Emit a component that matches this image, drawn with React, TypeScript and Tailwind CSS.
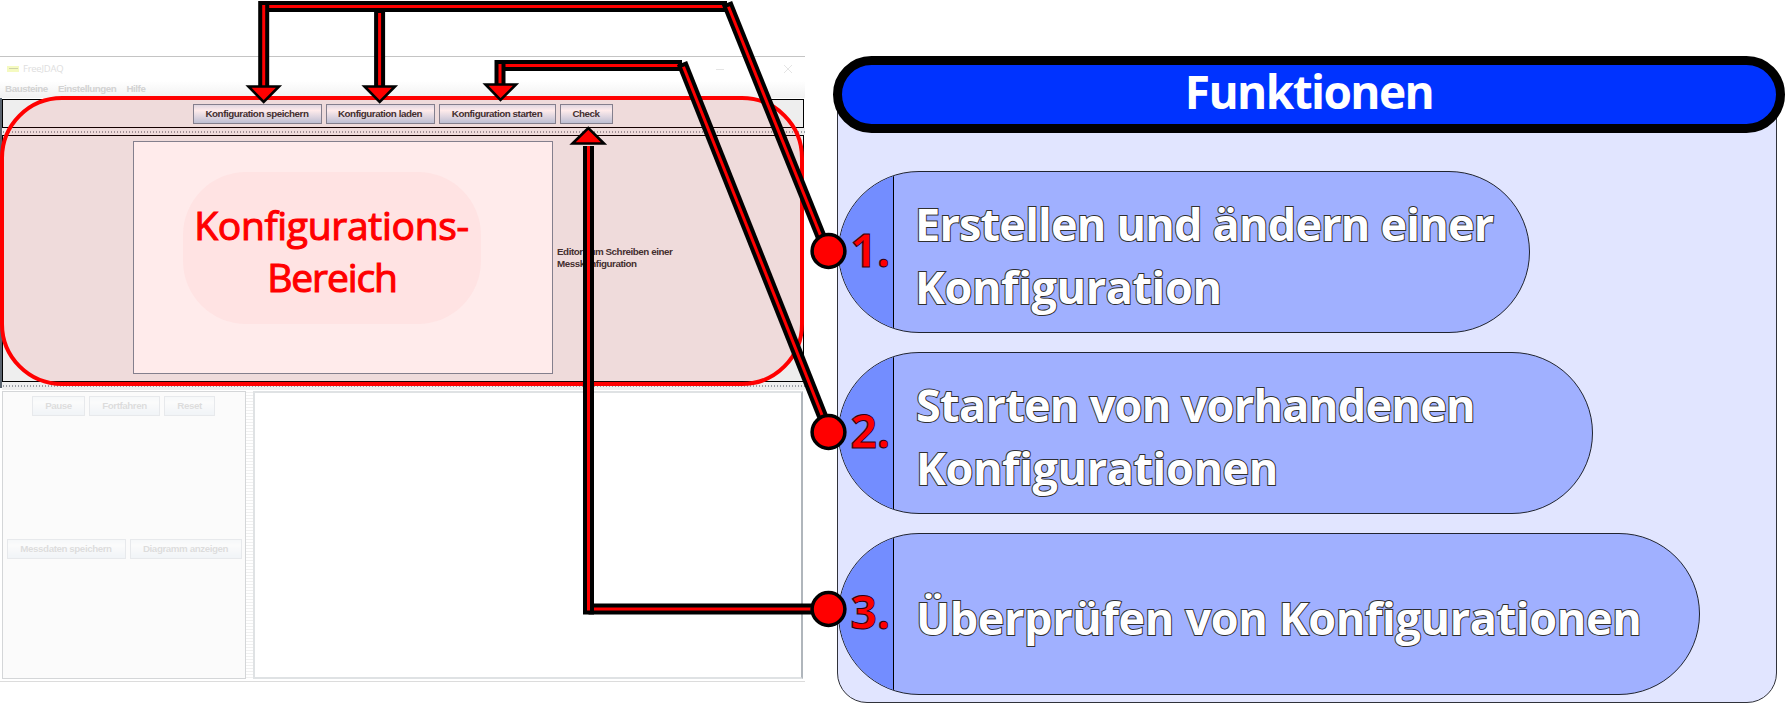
import { ReactNode } from "react";

const swing = "font-['Liberation_Sans',Arial,sans-serif] text-[9.8px] font-bold tracking-[-0.44px]";
const headline = "font-['Open_Sans','Noto_Sans',sans-serif] font-bold";

function SwingButton({ className, children }: { className: string; children: ReactNode }) {
  return (
    <button
      className={`flex shrink-0 items-center justify-center whitespace-nowrap border border-[#7a8a99] bg-linear-to-b from-[#dde8f3] via-white via-30% to-[#b8cfe5] text-[#333333] ${swing} ${className}`}
    >
      {children}
    </button>
  );
}

function Splitter({ className }: { className: string }) {
  return (
    <div className={`shrink-0 bg-[#eeeeee] py-[3px] ${className}`}>
      <div className="h-[2px] bg-[radial-gradient(circle,#9a9ea4_0.7px,transparent_0.8px)] bg-[length:3px_2px]" />
    </div>
  );
}

function AppWindow() {
  return (
    <div className="flex h-[626px] w-[805px] flex-col border-t border-[#c4c4c4]">
      <div className="flex h-6 shrink-0 items-center pl-[7px]">
        <div className="flex h-[6px] w-3 justify-center bg-[#f5fac0] pt-[2px]">
          <div className="h-px w-[9px] bg-[#cdd2a8]" />
        </div>
        <span className="ml-1 font-['Open_Sans',sans-serif] text-[9.5px] tracking-[-0.25px] text-[#dedede]">FreeJDAQ</span>
        <span className="ml-auto h-px w-2 bg-[#e4e4e4]" />
        <svg className="ml-[60px] mr-[13px] h-2 w-2" viewBox="0 0 8 8">
          <path d="M0 0L8 8M8 0L0 8" stroke="#e4e4e4" strokeWidth="1" />
        </svg>
      </div>
      <div className={`flex h-[17px] shrink-0 items-center gap-[10px] bg-linear-to-b from-white to-[#f1f1f1] pl-[5px] text-[#d2d2d2] ${swing}`}>
        <span>Bausteine</span>
        <span>Einstellungen</span>
        <span>Hilfe</span>
      </div>
      <div className="relative flex h-[290px] shrink-0 flex-col border-l-2 border-[#59636e] pt-px">
        <div className="flex h-[29px] w-[802px] shrink-0 justify-center gap-1 border border-black bg-[#eeeeee] pr-px pt-1">
          <SwingButton className="h-5 w-[129px]">Konfiguration speichern</SwingButton>
          <SwingButton className="h-5 w-[109px]">Konfiguration laden</SwingButton>
          <SwingButton className="h-5 w-[117px]">Konfiguration starten</SwingButton>
          <SwingButton className="h-5 w-[53px]">Check</SwingButton>
        </div>
        <Splitter className="h-[7px]" />
        <div className="flex h-[247px] w-[802px] shrink-0 items-center border border-black bg-[#eeeeee] pb-[3px] pl-[130px]">
          <div className="h-[233px] w-[420px] border border-[#7a8a99] bg-white" />
          <p className={`ml-1 pt-[2px] leading-[12px] text-[#333333] ${swing}`}>
            Editor zum Schreiben einer
            <br />
            Messkonfiguration
          </p>
        </div>
        <Splitter className="h-2" />
        <div className="absolute -left-[2px] -top-[2px] flex h-[290px] w-[804px] items-start rounded-[62px] border-4 border-[#ff0000] bg-[#ff0000]/8 pl-[179px] pt-[72px]">
          <div className="flex h-[152px] w-[298px] flex-col items-center justify-center rounded-[63px] bg-[#ffe3e3] pt-[6px] font-['Open_Sans','Noto_Sans',sans-serif] text-[39px] leading-[52px] text-[#ff0000] [-webkit-text-stroke:1.1px_#ff0000]">
            <span className="-ml-px tracking-[-0.3px]">Konfigurations-</span>
            <span className="tracking-[-1.1px]">Bereich</span>
          </div>
        </div>
      </div>
      <div className="flex h-[294px] shrink-0 border-b border-[#dcdcdc] pl-[2px] pt-[3px]">
        <div className="flex h-[288px] w-[244px] flex-col border border-[#d4d6d8] bg-[#fbfbfb]">
          <div className="flex justify-center gap-1 pr-px pt-1 opacity-15">
            <SwingButton className="h-5 w-[53px]">Pause</SwingButton>
            <SwingButton className="h-5 w-[71px]">Fortfahren</SwingButton>
            <SwingButton className="h-5 w-[51px]">Reset</SwingButton>
          </div>
          <div className="mt-[123px] flex justify-center gap-1 opacity-15">
            <SwingButton className="h-5 w-[119px]">Messdaten speichern</SwingButton>
            <SwingButton className="h-5 w-[112px]">Diagramm anzeigen</SwingButton>
          </div>
        </div>
        <div className="h-[288px] w-[7px] bg-[radial-gradient(circle,#f0f0f0_0.7px,transparent_0.8px)] bg-[length:2px_3px]" />
        <div className="h-[288px] w-[550px] border-2 border-[#dfe2e4] border-r-[#b0b6bc] bg-white" />
      </div>
    </div>
  );
}

function FunctionCard({ n, className, children }: { n: string; className: string; children: ReactNode }) {
  return (
    <li className={`flex h-[162.5px] overflow-hidden rounded-[82px] border border-[#20242f] bg-[#a0b0ff] ${headline} ${className}`}>
      <div className="flex w-[55px] shrink-0 items-center justify-end border-r border-black bg-[#738dff] pb-[5px] pr-[3px] text-[46px] text-[#ff0000] [-webkit-text-stroke:1px_#300010]">
        {n}
      </div>
      <div className="flex flex-col justify-center whitespace-nowrap pl-[22px] pt-[7px] text-[45px] leading-[63px] text-white [-webkit-text-stroke:2px_#303030] [paint-order:stroke_fill]">
        {children}
      </div>
    </li>
  );
}

function Arrows() {
  const bars: [number, number, number, number][] = [
    [263.5, 6.5, 727, 6.5],
    [682, 65.5, 500, 65.5],
    [588.5, 609, 815, 609],
    [263.7, 1, 263.7, 88],
    [379.6, 9, 379.6, 88],
    [500, 60, 500, 86],
    [588.5, 614.5, 588.5, 146],
    [727, 3, 822, 239],
    [682, 63, 824, 420],
  ];
  return (
    <svg className="pointer-events-none absolute left-0 top-0 h-[703px] w-[1785px]" viewBox="0 0 1785 703">
      {bars.map(([x1, y1, x2, y2], i) => (
        <g key={i}>
          <line x1={x1} y1={y1} x2={x2} y2={y2} stroke="#000" strokeWidth="11" />
          <line x1={x1} y1={y1} x2={x2} y2={y2} stroke="#f00" strokeWidth="3" strokeDasharray="1000" strokeDashoffset="-4" />
        </g>
      ))}
      <g fill="#f00" stroke="#000" strokeWidth="2.6">
        <path d="M248.5 86.5H279L263.7 102Z" />
        <path d="M364.5 86.5H395L379.7 102Z" />
        <path d="M485.5 84.5H516L500.5 100Z" />
        <path d="M572.5 143.5H604L588.3 128Z" />
      </g>
      <g fill="#f00" stroke="#000" strokeWidth="3.5">
        <circle cx="828.5" cy="251" r="16.4" />
        <circle cx="828.5" cy="432" r="16.4" />
        <circle cx="828.5" cy="609" r="16.4" />
      </g>
    </svg>
  );
}

export default function App() {
  return (
    <main className="relative flex h-[703px] w-[1785px] overflow-hidden bg-white">
      <section className="w-[833px] shrink-0 pt-[56px]">
        <AppWindow />
      </section>
      <section className="flex w-[952px] flex-col pt-[56px]">
        <h1 className={`relative z-10 flex h-[77px] shrink-0 items-center justify-center rounded-full border-[9px] border-black bg-[#0033ff] pb-[7px] text-[46px] tracking-[-1.6px] text-white ${headline}`}>
          Funktionen
        </h1>
        <ul className="ml-1 -mt-[40px] flex h-[610px] w-[940px] flex-col gap-[18.5px] rounded-b-[30px] border border-[#30323a] bg-[#e1e5ff] pt-[76.5px]">
          <FunctionCard n="1." className="w-[692px]">
            <span className="-ml-px tracking-[-0.8px]">Erstellen und ändern einer</span>
            <span className="-ml-px tracking-[-0.4px]">Konfiguration</span>
          </FunctionCard>
          <FunctionCard n="2." className="w-[755px]">
            <span className="tracking-[-0.7px]">Starten von vorhandenen</span>
            <span className="tracking-[-0.4px]">Konfigurationen</span>
          </FunctionCard>
          <FunctionCard n="3." className="w-[862px]">
            <span className="tracking-[-0.35px]">Überprüfen von Konfigurationen</span>
          </FunctionCard>
        </ul>
      </section>
      <Arrows />
    </main>
  );
}
